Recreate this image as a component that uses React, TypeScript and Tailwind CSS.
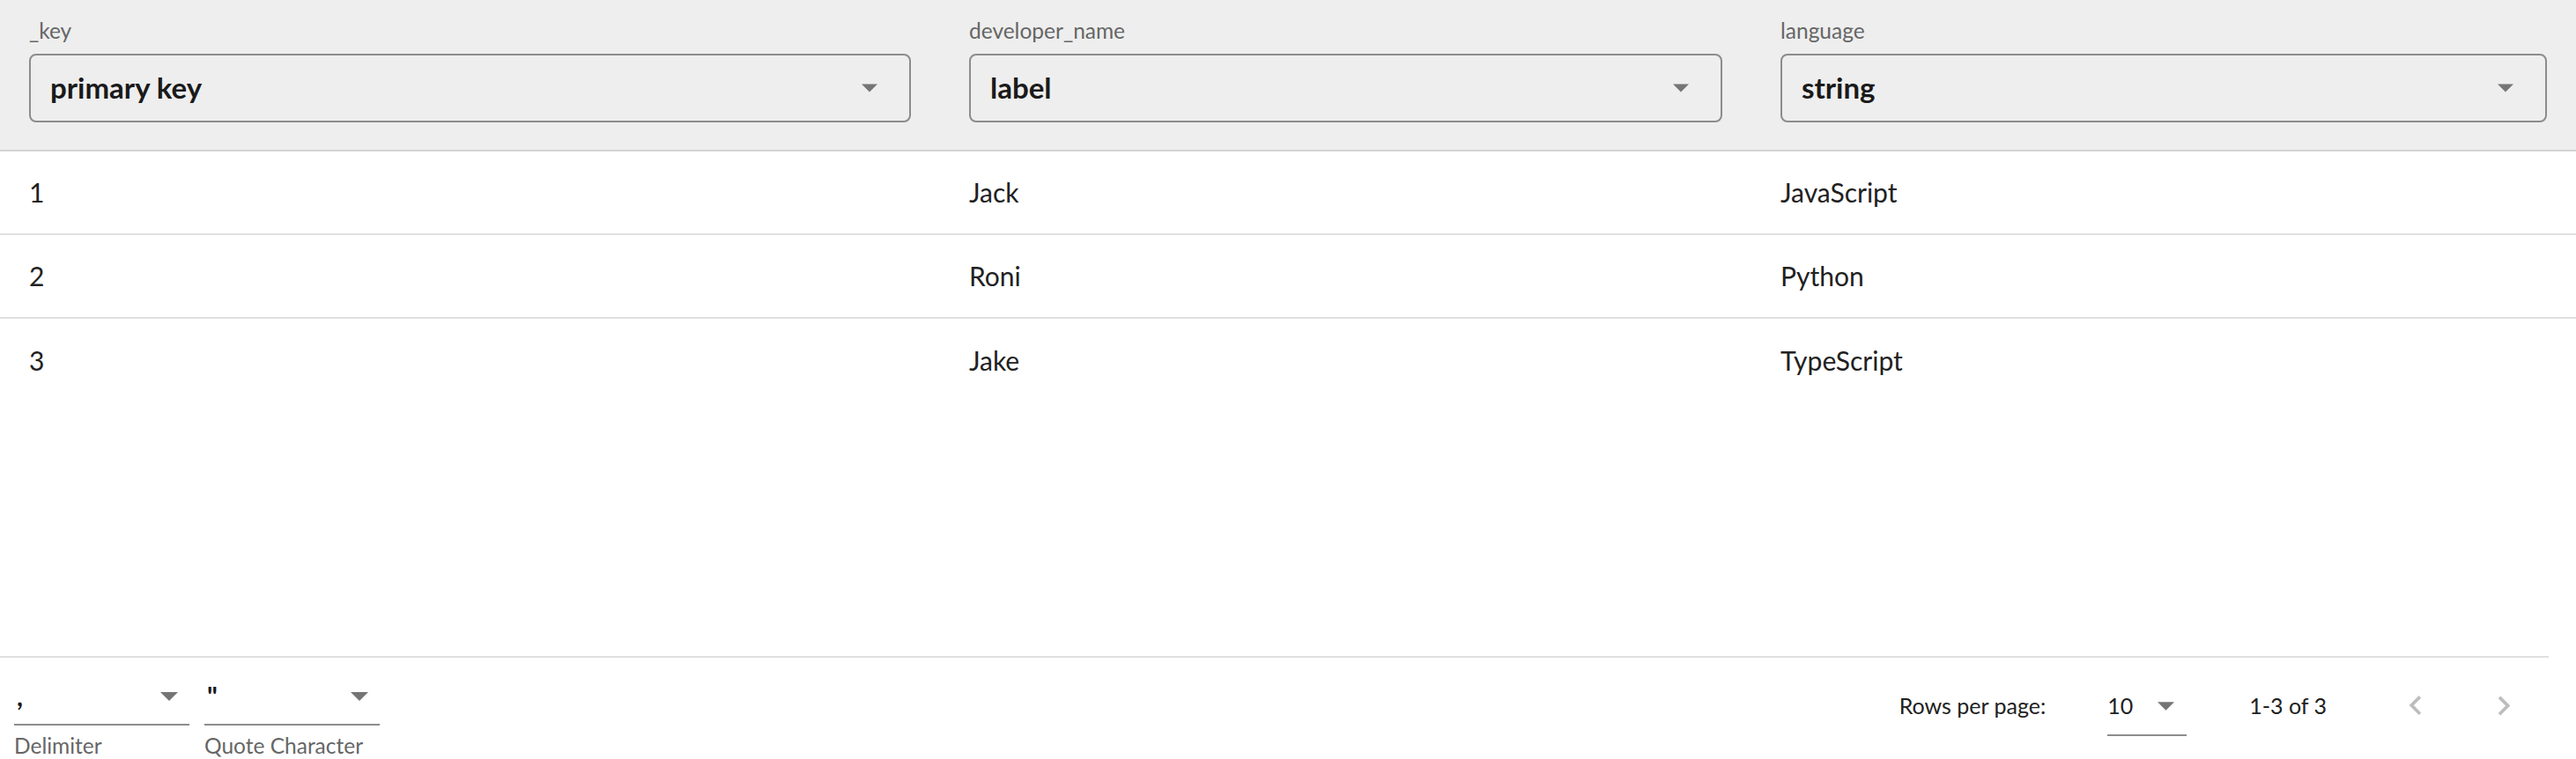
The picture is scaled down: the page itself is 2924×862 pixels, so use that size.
import React from "react";

const columns = [
  { name: "_key", type: "primary key" },
  { name: "developer_name", type: "label" },
  { name: "language", type: "string" },
];

const rows = [
  ["1", "Jack", "JavaScript"],
  ["2", "Roni", "Python"],
  ["3", "Jake", "TypeScript"],
];

function Caret({ className = "" }: { className?: string }) {
  return (
    <svg viewBox="0 0 20 10" className={className} fill="#757575">
      <polygon points="0,0 20,0 10,10" />
    </svg>
  );
}

function Chevron({ dir }: { dir: "left" | "right" }) {
  return (
    <div className="flex h-[48px] w-[48px] items-center justify-center">
      <svg viewBox="0 0 24 24" className="h-[44px] w-[44px]" fill="#bdbdbd">
        {dir === "left" ? (
          <path d="M15.41 16.09l-4.58-4.59 4.58-4.59L14 5.5l-6 6 6 6z" />
        ) : (
          <path d="M8.59 16.34l4.58-4.59-4.58-4.59L10 5.75l6 6-6 6z" />
        )}
      </svg>
    </div>
  );
}

function UnderlineSelect({ value, label }: { value: string; label: string }) {
  return (
    <div className="flex w-[199px] flex-col">
      <div className="relative flex h-[54px] items-center border-b-2 border-[#8c8c8c]">
        <span className="-mt-[13px] pl-[3px] text-[30px] font-bold leading-none text-[#1a1a1a]">
          {value}
        </span>
        <Caret className="absolute right-[13px] top-[16px] h-[10px] w-[20px]" />
      </div>
      <span className="mt-[8px] text-[24.5px] leading-[30px] text-[#666666]">{label}</span>
    </div>
  );
}

export default function App() {
  return (
    <div
      className="flex h-[862px] w-full flex-col overflow-hidden bg-white"
      style={{ fontFamily: "Lato, 'Open Sans', sans-serif" }}
    >
      {/* Column type header */}
      <div className="grid h-[172px] shrink-0 grid-cols-[1067px_921px_1fr] border-b-2 border-[#d4d4d4] bg-[#eeeeee]">
        {columns.map((c) => (
          <div key={c.name} className="flex flex-col px-[33px] pt-[20px]">
            <span className="text-[24.5px] leading-[30px] text-[#666666]">{c.name}</span>
            <div className="mt-[11px] flex h-[78px] items-center justify-between rounded-[8px] border-2 border-[#8c8c8c] pl-[22px] pr-[36px]">
              <span className="text-[33px] font-bold text-[#1a1a1a]">{c.type}</span>
              <Caret className="h-[10px] w-[18px]" />
            </div>
          </div>
        ))}
      </div>

      {/* Rows */}
      <div className="flex flex-col">
        {rows.map((r, i) => (
          <div
            key={r[0]}
            className={
              i < rows.length - 1
                ? "grid h-[95px] grid-cols-[1067px_921px_1fr] border-b-2 border-[#e0e0e0]"
                : "grid h-[95px] grid-cols-[1067px_921px_1fr]"
            }
          >
            {r.map((cell, j) => (
              <div key={j} className="flex items-center px-[33px] text-[30px] text-[#212121]">
                {cell}
              </div>
            ))}
          </div>
        ))}
      </div>

      <div className="flex-1" />

      {/* Footer */}
      <div className="mr-[31px] flex h-[117px] shrink-0 border-t-2 border-[#e0e0e0]">
        <div className="flex items-start gap-[17px] pl-[16px] pt-[23px]">
          <UnderlineSelect value="," label="Delimiter" />
          <UnderlineSelect value={'"'} label="Quote Character" />
        </div>
        <div className="flex-1" />
        <div className="flex items-start pr-[27px] pt-[31px]">
          <div className="flex h-[48px] items-center text-[25px] text-[#212121]">Rows per page:</div>
          <div className="ml-[70px] flex h-[58px] w-[90px] items-start border-b-2 border-[#8c8c8c]">
            <div className="flex h-[48px] w-full items-center justify-between pr-[14px]">
              <span className="text-[25px] text-[#212121]">10</span>
              <Caret className="h-[10px] w-[19px]" />
            </div>
          </div>
          <div className="ml-[71px] flex h-[48px] items-center text-[25px] text-[#212121]">1-3 of 3</div>
          <div className="ml-[77px] flex items-center gap-[52px]">
            <Chevron dir="left" />
            <Chevron dir="right" />
          </div>
        </div>
      </div>
    </div>
  );
}
